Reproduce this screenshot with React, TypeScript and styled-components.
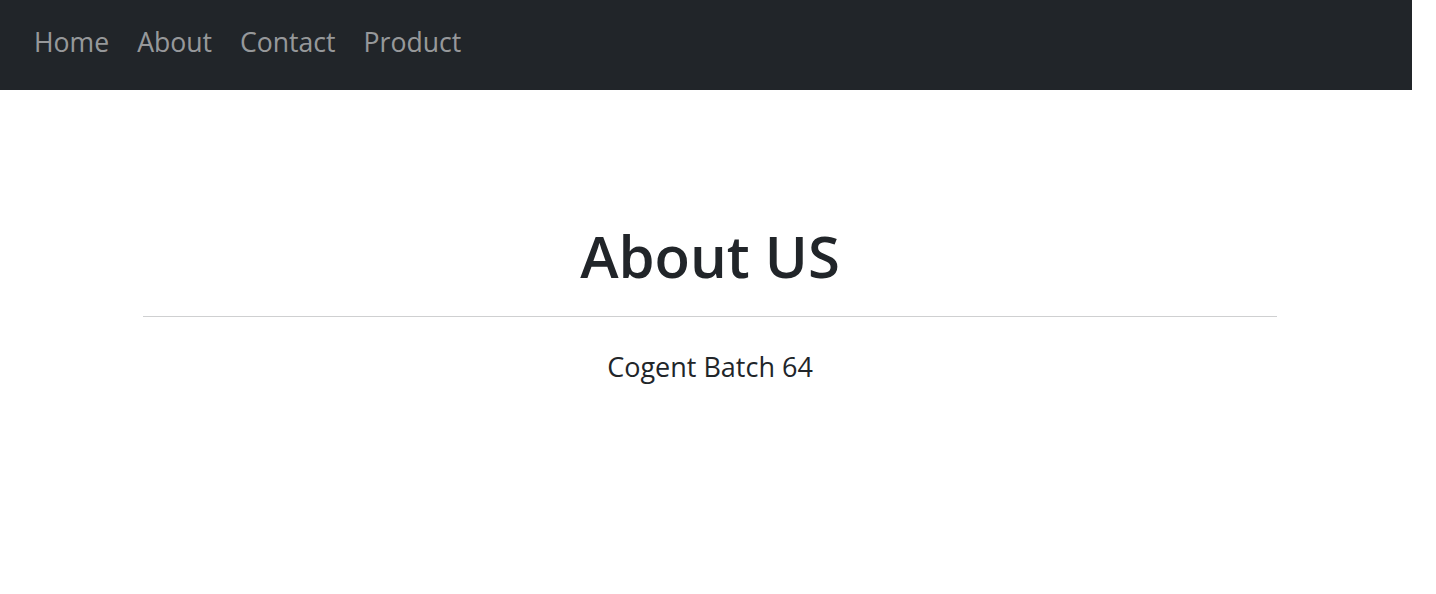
import React from "react";
import styled, { createGlobalStyle } from "styled-components";

const Global = createGlobalStyle`
  html, body { margin: 0; padding: 0; background: #ffffff; }
  body { font-family: "Open Sans", "Noto Sans", sans-serif; color: #212529; }
`;

const Page = styled.div`
  width: 1412px;
`;

const Navbar = styled.nav`
  height: 90px;
  background: #212529;
  display: flex;
  align-items: center;
  padding: 0 20px 6px;
  box-sizing: border-box;
`;

const NavList = styled.ul`
  list-style: none;
  margin: 0;
  padding: 0;
  display: flex;
`;

const NavLink = styled.a`
  display: block;
  padding: 0 14px;
  font-size: 26.6px;
  line-height: 36px;
  color: rgba(255, 255, 255, 0.55);
  text-decoration: none;
`;

const Main = styled.main`
  margin-left: 143px;
  width: 1134px;
  padding-top: 130px;
  text-align: center;
`;

const Title = styled.h1`
  margin: 0;
  font-size: 58px;
  font-weight: 600;
  line-height: 72px;
  color: #212529;
`;

const Rule = styled.hr`
  margin: 24px 0 0;
  border: 0;
  border-top: 1px solid #cfd0d1;
`;

const Subtitle = styled.p`
  margin: 30px 0 0;
  font-size: 27px;
  line-height: 40px;
  color: #212529;
`;

const links = ["Home", "About", "Contact", "Product"];

export default function App() {
  return (
    <Page>
      <Global />
      <Navbar>
        <NavList>
          {links.map((l) => (
            <li key={l}>
              <NavLink href="#">{l}</NavLink>
            </li>
          ))}
        </NavList>
      </Navbar>
      <Main>
        <Title>About US</Title>
        <Rule />
        <Subtitle>Cogent Batch 64</Subtitle>
      </Main>
    </Page>
  );
}
